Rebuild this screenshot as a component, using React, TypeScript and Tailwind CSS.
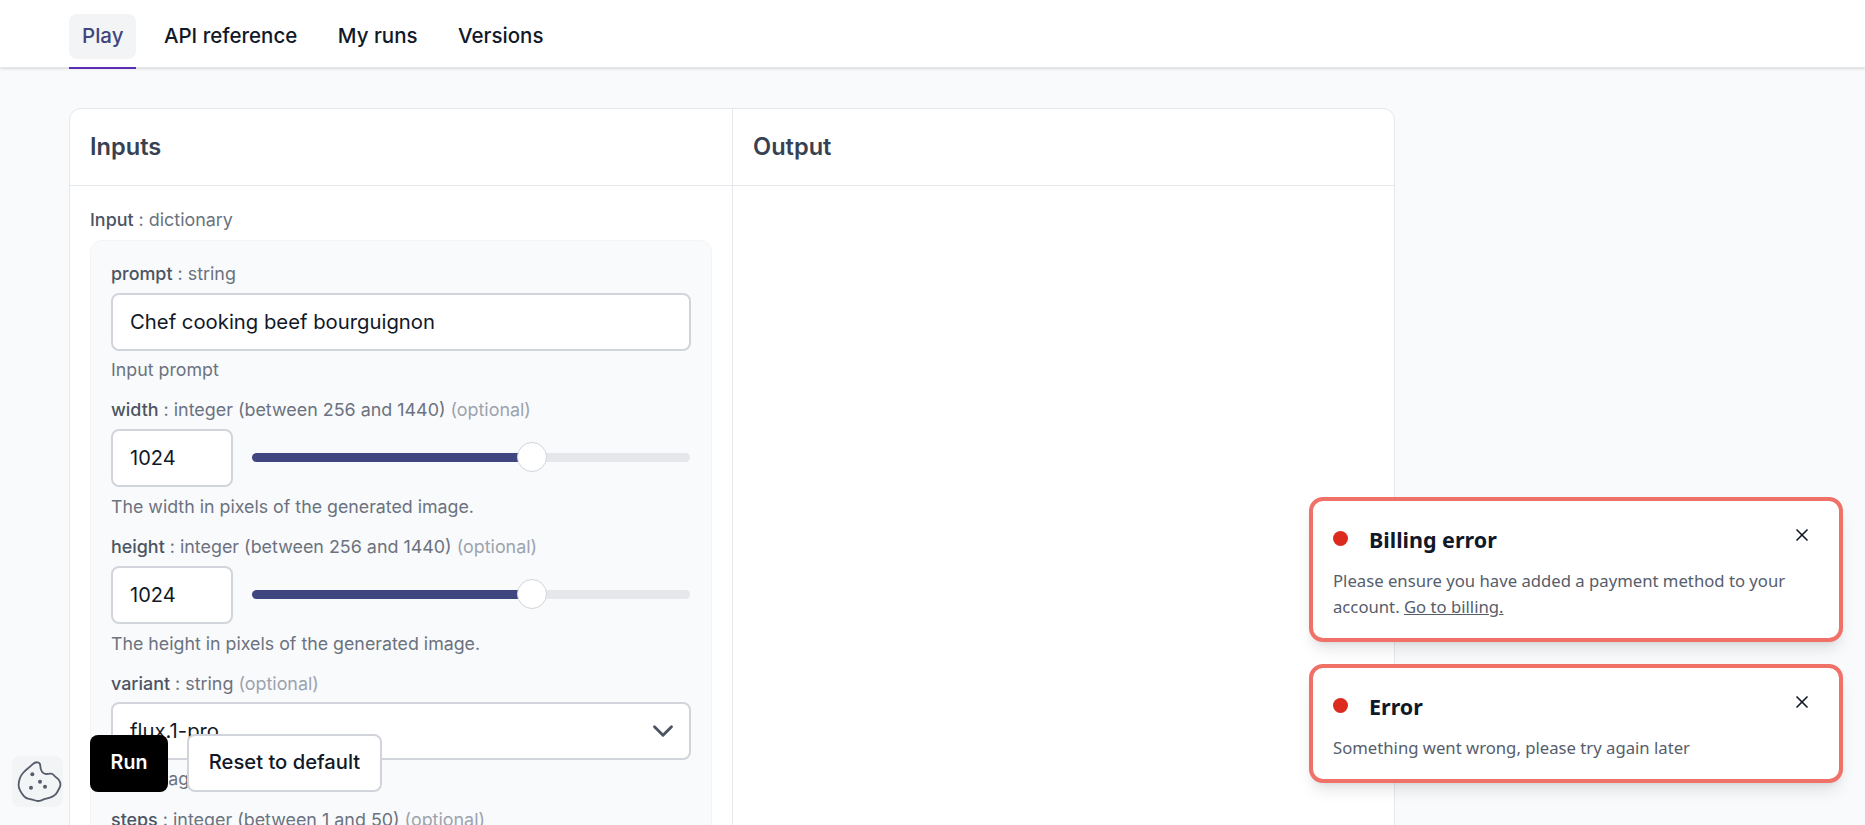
import React from "react";
import { X, ChevronDown } from "lucide-react";

const tabs = ["Play", "API reference", "My runs", "Versions"];

// outline of the cookie, smoothed through the midpoints
const cookiePts = [
  [42, 92], [48, 76], [60, 62], [75, 50], [90, 36], [106, 38], [106, 58], [116, 72], [130, 72], [142, 70],
  [150, 80], [162, 88], [168, 105], [160, 120], [152, 135], [135, 143], [118, 147], [100, 155], [82, 148],
  [62, 145], [50, 130], [40, 112],
];
const mid = (a: number[], b: number[]) => `${(a[0] + b[0]) / 2} ${(a[1] + b[1]) / 2}`;
const cookiePath =
  `M${mid(cookiePts[cookiePts.length - 1], cookiePts[0])}` +
  cookiePts.map((p, i) => `Q${p[0]} ${p[1]} ${mid(p, cookiePts[(i + 1) % cookiePts.length])}`).join("") +
  "Z";

const Label = ({ name, type, optional }: { name: string; type: string; optional?: boolean }) => (
  <div className="text-[17.9px] leading-[20px] text-[#6b7280]">
    <span className="text-[#4b5563] font-medium">{name}</span> : {type}
    {optional && <span className="text-[#9ca3af]"> (optional)</span>}
  </div>
);

const Help = ({ children, className = "mt-[9px]" }: { children: React.ReactNode; className?: string }) => (
  <div className={className + " text-[17.8px] leading-[20px] text-[#6b7280]"}>{children}</div>
);

const SliderField = ({ name, help }: { name: string; help: string }) => (
  <div className="mt-[20px]">
    <Label name={name} type="integer (between 256 and 1440)" optional />
    <div className="mt-[9px] flex items-center">
      <div className="w-[122px] h-[58px] shrink-0 flex items-center pl-[17px] bg-white border-2 border-[#d1d5db] rounded-lg text-[20px] text-[#111827]">
        1024
      </div>
      <div className="relative ml-[19px] w-[438px] h-[9px] -mt-[1px] rounded-full bg-[#e5e7eb]">
        <div className="w-[270px] h-full rounded-full bg-[#3f4680]" />
        <div className="absolute left-[265px] top-[-11px] w-[30px] h-[30px] rounded-full bg-white border border-[#d1d5db]" />
      </div>
    </div>
    <Help className="mt-[10px]">{help}</Help>
  </div>
);

const Toast = ({ title, children }: { title: string; children: React.ReactNode }) => (
  <div className="relative w-[534px] bg-white border-[4px] border-[#ef7168] rounded-[14px] shadow-lg pl-[20px] pr-[24px] pt-[25px] pb-[18px]" style={{ fontFamily: '"Noto Sans", sans-serif' }}>
    <div className="flex items-center h-[28px]">
      <span className="w-[15px] h-[15px] -mt-[3px] rounded-full bg-[#dc2b1e]" />
      <span className="ml-[21px] text-[21.5px] font-bold text-[#111827]">{title}</span>
    </div>
    <div className="mt-[14px] text-[16.7px] leading-[26px] text-[#565d6b]">{children}</div>
    <X className="absolute top-[24px] right-[27px] text-[#111827]" size={20} strokeWidth={2} />
  </div>
);

export default function App() {
  return (
    <div className="relative h-[825px] overflow-hidden bg-[#f9fafb]" style={{ fontFamily: "Inter, sans-serif" }}>
      <nav className="h-[68px] bg-white border-b border-[#e5e7eb] pl-[69px] flex gap-[14.5px] shadow-sm">
        {tabs.map((tab, i) => (
          <div key={tab} className={"h-[69px] pt-[14px] border-b-2 " + (i === 0 ? "border-[#5b2fb5]" : "border-transparent")}>
            <div className={"h-[45px] px-[13px] flex items-center rounded-lg text-[20.5px] font-medium " + (i === 0 ? "bg-[#f3f4f6] text-[#3f4680]" : "text-[#111827]")}>
              {tab}
            </div>
          </div>
        ))}
      </nav>

      <main className="ml-[69px] mt-[40px] w-[1326px] bg-white border border-[#e5e7eb] rounded-xl flex">
        <section className="w-[663px] border-r border-[#e5e7eb]">
          <h2 className="h-[77px] px-[20px] flex items-center border-b border-[#e5e7eb] text-[23.6px] font-semibold text-[#374151]">Inputs</h2>
          <div className="pt-[24px] px-[20px]">
            <Label name="Input" type="dictionary" />
            <div className="mt-[10px] w-[622px] bg-[#f9fafb] border border-[#f3f4f6] rounded-xl px-[20px] pt-[23px] pb-[40px]">
              <Label name="prompt" type="string" />
              <div className="mt-[9px] h-[58px] flex items-center pl-[17px] bg-white border-2 border-[#d1d5db] rounded-lg text-[20.3px] text-[#111827]">
                Chef cooking beef bourguignon
              </div>
              <Help>Input prompt</Help>
              <SliderField name="width" help="The width in pixels of the generated image." />
              <SliderField name="height" help="The height in pixels of the generated image." />
              <div className="mt-[20px]">
                <Label name="variant" type="string" optional />
                <div className="mt-[8px] h-[58px] flex items-center justify-between pl-[17px] pr-[9px] bg-white border-2 border-[#d1d5db] rounded-lg text-[20.3px] text-[#111827]">
                  flux.1-pro
                  <ChevronDown className="text-[#4b5563]" size={34} strokeWidth={2} />
                </div>
                <Help>The image generation variant.</Help>
              </div>
              <div className="mt-[21px]">
                <Label name="steps" type="integer (between 1 and 50)" optional />
              </div>
            </div>
          </div>
        </section>
        <section className="flex-1">
          <h2 className="h-[77px] px-[20px] flex items-center border-b border-[#e5e7eb] text-[23.6px] font-semibold text-[#374151]">Output</h2>
        </section>
      </main>

      <div className="absolute left-[90px] top-[734px] flex items-center gap-[19px]">
        <button className="w-[78px] h-[57px] bg-black text-white rounded-lg text-[19.6px] font-semibold">Run</button>
        <button className="w-[195px] h-[58px] pb-[2px] bg-white border-2 border-[#d1d5db] rounded-lg text-[20.2px] font-medium text-[#111827]">Reset to default</button>
      </div>

      <div className="absolute left-[12px] top-[756px] w-[51px] h-[51px] rounded-lg bg-[#f3f4f6]">
        <svg width="51" height="51" viewBox="21 18 153 153" fill="none" stroke="#565d6b" strokeWidth="5.5" strokeLinejoin="round">
          <path d={cookiePath} />
          <circle cx="82" cy="73" r="6" fill="#565d6b" stroke="none" />
          <circle cx="105" cy="95" r="6" fill="#565d6b" stroke="none" />
          <circle cx="78" cy="113" r="6" fill="#565d6b" stroke="none" />
          <circle cx="120" cy="110" r="6" fill="#565d6b" stroke="none" />
        </svg>
      </div>

      <div className="absolute left-[1309px] top-[497px] flex flex-col gap-[22px]">
        <Toast title="Billing error">
          Please ensure you have added a payment method to your account.{" "}
          <span className="underline">Go to billing.</span>
        </Toast>
        <Toast title="Error">Something went wrong, please try again later</Toast>
      </div>
    </div>
  );
}
